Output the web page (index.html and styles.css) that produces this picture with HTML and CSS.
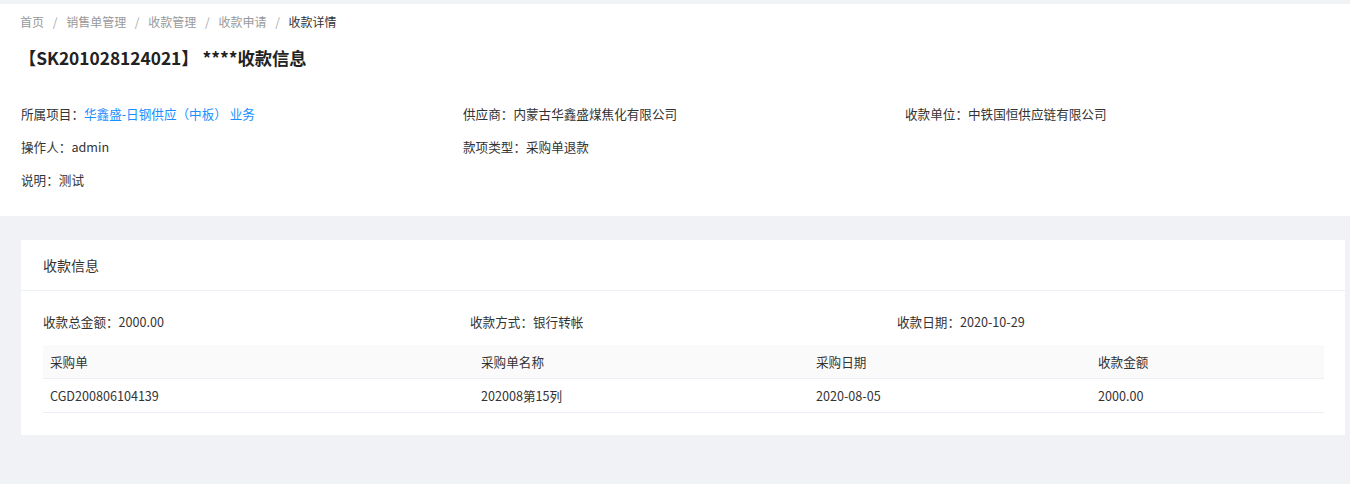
FILE: index.html
```html
<!DOCTYPE html>
<html lang="zh-CN">

<head>
    <meta charset="UTF-8">
    <meta name="viewport" content="width=device-width, initial-scale=1.0">
    <title>收款详情</title>
    <link rel="stylesheet" href="styles.css">
</head>

<body>
    <div class="page-head">
        <div class="breadcrumb">
            <span class="crumb">首页</span>
            <span class="sep">/</span>
            <span class="crumb">销售单管理</span>
            <span class="sep">/</span>
            <span class="crumb">收款管理</span>
            <span class="sep">/</span>
            <span class="crumb">收款申请</span>
            <span class="sep">/</span>
            <span class="crumb current">收款详情</span>
        </div>
        <div class="page-title">【SK201028124021】 ****收款信息</div>
        <div class="info-grid">
            <div class="info-item">所属项目：<a class="link" href="#">华鑫盛-日钢供应（中板） 业务</a></div>
            <div class="info-item">供应商：内蒙古华鑫盛煤焦化有限公司</div>
            <div class="info-item">收款单位：中铁国恒供应链有限公司</div>
            <div class="info-item">操作人：admin</div>
            <div class="info-item">款项类型：采购单退款</div>
            <div class="info-item"></div>
            <div class="info-item">说明：测试</div>
        </div>
    </div>

    <div class="card">
        <div class="card-header">收款信息</div>
        <div class="card-body">
            <div class="pay-grid">
                <div class="info-item">收款总金额：2000.00</div>
                <div class="info-item">收款方式：银行转帐</div>
                <div class="info-item">收款日期：2020-10-29</div>
            </div>
            <table class="order-table">
                <tr>
                    <th class="col-no">采购单</th>
                    <th class="col-name">采购单名称</th>
                    <th class="col-date">采购日期</th>
                    <th>收款金额</th>
                </tr>
                <tr>
                    <td>CGD200806104139</td>
                    <td>202008第15列</td>
                    <td>2020-08-05</td>
                    <td>2000.00</td>
                </tr>
            </table>
        </div>
    </div>
</body>

</html>
```

FILE: styles.css
```css
body {
    margin: 0;
    background-color: #f0f2f5;
    color: #333;
    font-family: "Noto Sans CJK SC", "Liberation Sans", sans-serif;
    font-size: 12.6px;
}

.page-head {
    margin-top: 4px;
    background-color: #fff;
    padding: 8px 3px 26px 21px;
}

.breadcrumb {
    font-size: 12px;
    line-height: 20px;
    color: #999;
    margin-left: -1px;
}

.sep {
    margin: 0 6px;
    color: #aaa;
}

.crumb.current {
    color: #333;
}

.page-title {
    margin-top: 14px;
    margin-left: -2px;
    font-size: 17.3px;
    font-weight: bold;
    line-height: 24px;
    color: #222;
}

.info-grid {
    margin-top: 34px;
    display: grid;
    grid-template-columns: repeat(3, 1fr);
    row-gap: 13px;
}

.info-item {
    line-height: 20px;
    min-height: 20px;
}

.link {
    color: #1890ff;
    text-decoration: none;
}

.card {
    margin: 24px 5px 0 21px;
    background-color: #fff;
    padding-bottom: 22px;
}

.card-header {
    height: 50px;
    line-height: 50px;
    padding: 0 22px;
    border-bottom: 1px solid #ebeef5;
    font-size: 14px;
}

.card-body {
    padding: 21px 21px 0 22px;
}

.pay-grid {
    display: grid;
    grid-template-columns: repeat(3, 1fr);
}

.order-table {
    margin-top: 13px;
    width: 100%;
    border-collapse: collapse;
}

th,
td {
    text-align: left;
    font-weight: normal;
    padding: 0 7px;
    height: 33px;
    border-bottom: 1px solid #ebeef5;
}

th {
    background-color: #fafafa;
}

.col-no {
    width: 417px;
}

.col-name {
    width: 321px;
}

.col-date {
    width: 268px;
}
```
